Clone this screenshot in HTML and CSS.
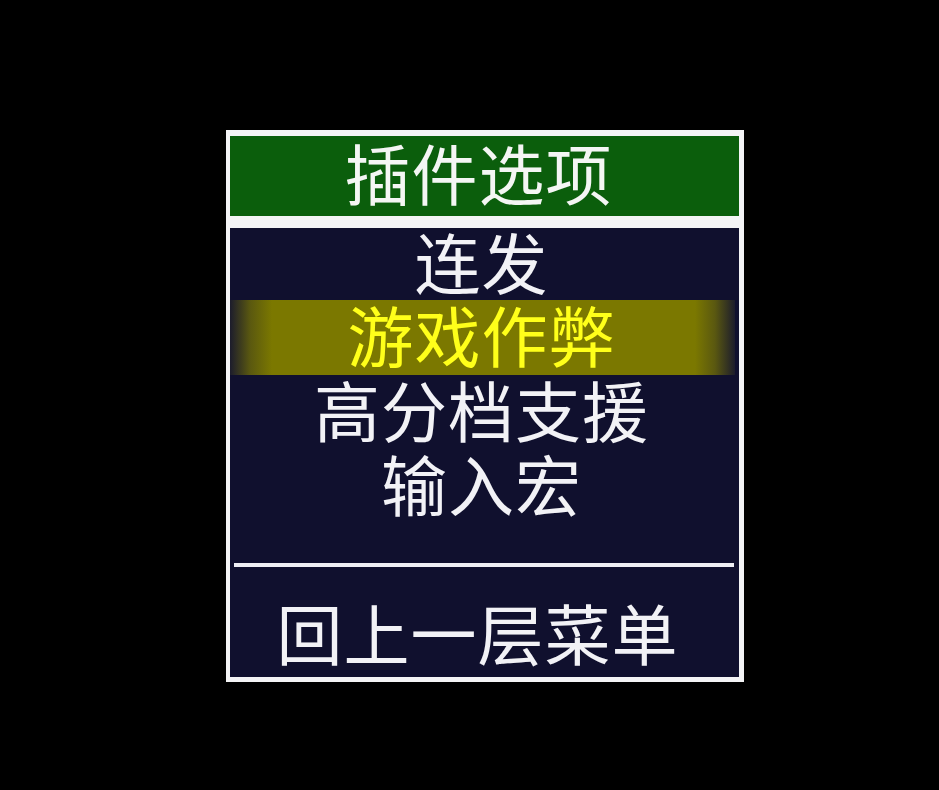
FILE: index.html
```html
<!DOCTYPE html>
<html lang="zh-CN">
<head>
<meta charset="utf-8">
<title>插件选项</title>
<link rel="stylesheet" href="styles.css">
</head>
<body>
<div class="frame">
  <div class="header">插件选项</div>
  <div class="panel">
    <ul class="list">
      <li class="item first">连发</li>
      <li class="item selected">游戏作弊</li>
      <li class="item">高分档支援</li>
      <li class="item">输入宏</li>
    </ul>
    <div class="separator"></div>
    <div class="item footer">回上一层菜单</div>
  </div>
</div>
</body>
</html>
```
FILE: styles.css
```css
html, body {
  margin: 0;
  padding: 0;
  background: #000;
}
body {
  width: 939px;
  height: 790px;
  padding: 130px 0 0 226px;
  box-sizing: border-box;
  font-family: "Liberation Sans", "Noto Sans CJK SC", sans-serif;
}
.frame {
  width: 518px;
  height: 552px;
  box-sizing: border-box;
  background: #f4f4f6;
  padding: 6px 5px 5px 4px;
  display: flex;
  flex-direction: column;
  gap: 12px;
}
.header {
  height: 80px;
  box-sizing: border-box;
  padding: 4px 12px 0 0;
  background: #0b5e0c;
  color: #f4f6f4;
  font-size: 66px;
  line-height: 74px;
  letter-spacing: 1px;
  text-align: center;
}
.panel {
  flex: 1;
  background: #10102e;
  display: flex;
  flex-direction: column;
}
.list {
  list-style: none;
  margin: 0;
  padding: 0;
}
.item {
  height: 74px;
  box-sizing: border-box;
  padding: 2px 6px 0 0;
  line-height: 74px;
  font-size: 66px;
  letter-spacing: 1px;
  color: #f2f2f6;
  text-align: center;
}
.item.first {
  height: 72px;
  line-height: 72px;
}
.item.selected {
  height: 75px;
  line-height: 75px;
  margin-right: 4px;
  padding-right: 2px;
  color: #ffff1a;
  background: linear-gradient(to right, #1c1c2c 0px, #5a5810 20px, #7b7800 42px, #7b7800 calc(100% - 40px), #5a5810 calc(100% - 20px), #1c1c2c 100%);
}
.separator {
  height: 4px;
  margin: 40px 5px 0 4px;
  background: #eeeef4;
}
.footer {
  margin-top: 31px;
  padding-right: 14px;
}
```
